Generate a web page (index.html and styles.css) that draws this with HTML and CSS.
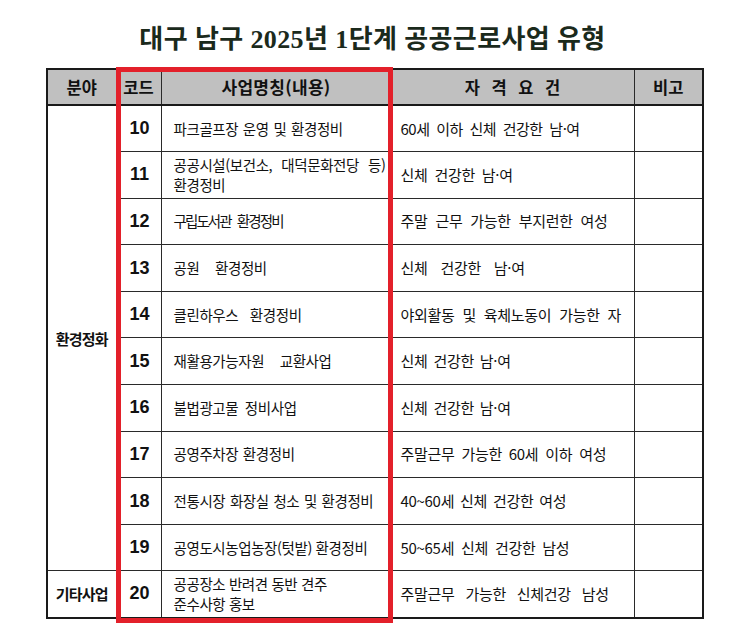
FILE: index.html
```html
<!DOCTYPE html>
<html lang="ko">
<head>
<meta charset="utf-8">
<link rel="stylesheet" href="styles.css">
</head>
<body>
<h1 class="title">대구 남구 2025년 1단계 공공근로사업 유형</h1>
<div class="wrap">
  <table class="grid">
    <colgroup>
      <col class="c1"><col class="c2"><col class="c3"><col class="c4"><col class="c5">
    </colgroup>
    <thead>
      <tr class="head">
        <th>분야</th>
        <th>코드</th>
        <th class="wide-head">사업명칭(내용)</th>
        <th class="spaced">자 격 요 건</th>
        <th>비고</th>
      </tr>
    </thead>
    <tbody>
      <tr>
        <td class="field" rowspan="10">환경정화</td>
        <td class="code">10</td>
        <td class="name ws1">파크골프장 운영 및 환경정비</td>
        <td class="req snug ws3">60세 이하 신체 건강한 남·여</td>
        <td></td>
      </tr>
      <tr>
        <td class="code">11</td>
        <td class="name"><span class="just">공공시설(보건소, 대덕문화전당 등)</span>환경정비</td>
        <td class="req ws3">신체 건강한 남·여</td>
        <td></td>
      </tr>
      <tr>
        <td class="code">12</td>
        <td class="name tight ws4">구립도서관 환경정비</td>
        <td class="req ws4">주말 근무 가능한 부지런한 여성</td>
        <td></td>
      </tr>
      <tr>
        <td class="code">13</td>
        <td class="name ws12">공원 환경정비</td>
        <td class="req ws9">신체 건강한 남·여</td>
        <td></td>
      </tr>
      <tr>
        <td class="code">14</td>
        <td class="name ws8">클린하우스 환경정비</td>
        <td class="req ws4">야외활동 및 육체노동이 가능한 자</td>
        <td></td>
      </tr>
      <tr>
        <td class="code">15</td>
        <td class="name ws12">재활용가능자원 교환사업</td>
        <td class="req ws2">신체 건강한 남·여</td>
        <td></td>
      </tr>
      <tr>
        <td class="code">16</td>
        <td class="name ws3">불법광고물 정비사업</td>
        <td class="req ws2">신체 건강한 남·여</td>
        <td></td>
      </tr>
      <tr>
        <td class="code">17</td>
        <td class="name ws1">공영주차장 환경정비</td>
        <td class="req ws3">주말근무 가능한 60세 이하 여성</td>
        <td></td>
      </tr>
      <tr>
        <td class="code">18</td>
        <td class="name ws1">전통시장 화장실 청소 및 환경정비</td>
        <td class="req ws2">40~60세 신체 건강한 여성</td>
        <td></td>
      </tr>
      <tr>
        <td class="code">19</td>
        <td class="name">공영도시농업농장(텃밭) 환경정비</td>
        <td class="req ws3">50~65세 신체 건강한 남성</td>
        <td></td>
      </tr>
      <tr>
        <td class="field">기타사업</td>
        <td class="code">20</td>
        <td class="name">공공장소 반려견 동반 견주<br>준수사항 홍보</td>
        <td class="req ws7">주말근무 가능한 신체건강 남성</td>
        <td></td>
      </tr>
    </tbody>
  </table>
  <div class="redbox"></div>
</div>
</body>
</html>
```
FILE: styles.css
```css
html, body {
  margin: 0;
  padding: 0;
  background: #ffffff;
}

body {
  width: 729px;
  height: 640px;
  overflow: hidden;
  font-family: "Noto Sans CJK KR", "Noto Sans", sans-serif;
  color: #111;
}

.title {
  margin: 0;
  padding-top: 24px;
  height: 44px;
  line-height: 32px;
  text-align: center;
  font-family: "Liberation Serif", "Noto Sans CJK KR", serif;
  font-size: 26px;
  font-weight: 700;
  color: #1b2a1c;
  letter-spacing: 0.4px;
  padding-left: 16px;
}

.wrap {
  position: relative;
  margin-left: 46px;
  width: 656px;
}

.grid {
  border-collapse: collapse;
  table-layout: fixed;
  width: 656px;
  border: 2px solid #1a1a1a;
}

.c1 { width: 69px; }
.c2 { width: 45px; }
.c3 { width: 230px; }
.c4 { width: 243px; }
.c5 { width: 69px; }

.grid th,
.grid td {
  border: 1px solid #2a2a2a;
  padding: 0;
}

.head {
  height: 36px;
  background: #c0c0c0;
}

.head th {
  font-size: 16.5px;
  font-weight: 700;
  text-align: center;
  color: #111;
  border-bottom: 2px solid #1a1a1a;
  line-height: 20px;
}

.head th.wide-head {
  font-size: 17px;
  letter-spacing: 0.3px;
}

.head th.spaced {
  word-spacing: 7px;
}

.grid tbody tr {
  height: 46.6px;
}

.field {
  text-align: center;
  font-size: 15px;
  font-weight: 700;
  letter-spacing: -0.8px;
}

.code {
  text-align: center;
  font-family: "Liberation Sans", Arial, sans-serif;
  font-size: 18px;
  font-weight: 700;
}

.grid td.code {
  padding-left: 2px;
}

.name,
.req {
  line-height: 20px;
  white-space: nowrap;
}

.grid td.name {
  font-size: 14.5px;
  letter-spacing: -0.4px;
  padding-left: 12px;
}

.grid td.req {
  font-size: 15px;
  letter-spacing: -0.3px;
  padding-left: 9px;
}

.grid td.req.snug {
  letter-spacing: -0.5px;
}

.just {
  display: block;
  width: 212px;
  text-align: justify;
  text-align-last: justify;
}

.grid td.name.tight { letter-spacing: -1.9px; }

.ws1 { word-spacing: 1px; }
.ws2 { word-spacing: 2px; }
.ws3 { word-spacing: 3px; }
.ws4 { word-spacing: 4px; }
.ws7 { word-spacing: 7px; }
.ws8 { word-spacing: 8px; }
.ws9 { word-spacing: 9px; }
.ws12 { word-spacing: 12px; }

.redbox {
  position: absolute;
  left: 70px;
  top: -1px;
  width: 267px;
  height: 546px;
  border: 5px solid #e3202a;
  pointer-events: none;
}
```
